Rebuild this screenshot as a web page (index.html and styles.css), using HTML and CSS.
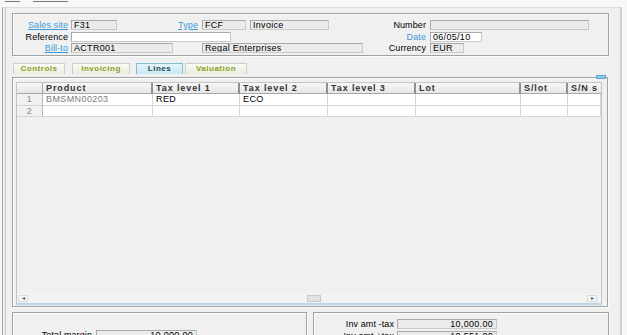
FILE: index.html
```html
<!DOCTYPE html>
<html>
<head>
<meta charset="utf-8">
<link rel="stylesheet" href="styles.css">
</head>
<body>
<div class="menu"><span class="m1"></span><span class="m2"></span></div>
<div class="window">
  <div class="panel head">
    <div class="frow">
      <a class="lbl w55 link">Sales site</a><span class="fld ro w46 ml3">F31</span>
      <a class="lbl w81 link">Type</a><span class="fld ro w44 ml4">FCF</span><span class="fld ro w79 ml4">Invoice</span>
      <span class="lbl w97">Number</span><span class="fld ro w159 ml4"></span>
    </div>
    <div class="frow">
      <span class="lbl w55">Reference</span><span class="fld w160 ml3"></span>
      <span class="lbl w195 blue">Date</span><span class="fld w52 ml4">06/05/10</span>
    </div>
    <div class="frow">
      <a class="lbl w55 link">Bill-to</a><span class="fld ro w102 ml3">ACTR001</span>
      <span class="fld ro w161 ml29">Regal Enterprises</span>
      <span class="lbl w63">Currency</span><span class="fld ro w34 ml4">EUR</span>
    </div>
  </div>

  <div class="tabs">
    <span class="tab t1">Controls</span>
    <span class="tab t2">Invoicing</span>
    <span class="tab active t3">Lines</span>
    <span class="tab t4">Valuation</span>
  </div>

  <div class="panel lines">
    <span class="corner"></span>
    <div class="grid">
      <div class="grow ghead">
        <span class="c num"></span>
        <span class="c">Product</span>
        <span class="c">Tax level 1</span>
        <span class="c">Tax level 2</span>
        <span class="c">Tax level 3</span>
        <span class="c">Lot</span>
        <span class="c">S/lot</span>
        <span class="c">S/N s</span>
      </div>
      <div class="grow gbody r1">
        <span class="c num">1</span>
        <span class="c grey">BMSMN00203</span>
        <span class="c">RED</span>
        <span class="c">ECO</span>
        <span class="c"></span>
        <span class="c"></span>
        <span class="c"></span>
        <span class="c"></span>
      </div>
      <div class="grow gbody r2">
        <span class="c num">2</span>
        <span class="c"></span>
        <span class="c"></span>
        <span class="c"></span>
        <span class="c"></span>
        <span class="c"></span>
        <span class="c"></span>
        <span class="c"></span>
      </div>
      <div class="gempty"></div>
      <div class="hscroll">
        <span class="arr left">&#9666;</span>
        <span class="track"><span class="thumb"></span></span>
        <span class="arr right">&#9656;</span>
      </div>
    </div>
  </div>

  <div class="bottom">
    <div class="panel totals">
      <div class="frow">
        <span class="lbl w79">Total margin</span><span class="fld ro num-f w101 ml4">10,000.00</span>
      </div>
    </div>
    <div class="panel amounts">
      <div class="frow">
        <span class="lbl w80">Inv amt -tax</span><span class="fld ro num-f w100 ml3">10,000.00</span>
      </div>
      <div class="frow">
        <span class="lbl w80">Inv amt +tax</span><span class="fld ro num-f w100 ml3">10,551.00</span>
      </div>
    </div>
  </div>
</div>
</body>
</html>
```

FILE: styles.css
```css
* { box-sizing: border-box; }
html, body {
  margin: 0;
  padding: 0;
}
body {
  width: 627px;
  height: 335px;
  overflow: hidden;
  background: #f8f8f8;
  font-family: "Liberation Sans", Arial, sans-serif;
  font-size: 9px;
  color: #000;
}

.menu {
  height: 7px;
  display: flex;
  align-items: flex-start;
}
.menu .m1 { width: 15px; height: 1px; background: #777; margin-left: 5px; margin-top: 1px; }
.menu .m2 { width: 35px; height: 1px; background: #777; margin-left: 13px; margin-top: 1px; }

.window {
  margin-left: 2px;
  width: 620px;
  height: 340px;
  background: #f0f0f0;
  border-left: 1px solid #a3a3a3;
  border-right: 2px solid #c3d2dc;
  border-top: 1px solid #dcdcdc;
  box-shadow: inset 2px 0 0 #f0f0f0, inset 3px 0 0 #c9c9c9;
  padding: 5px 10px 0 9px;
}

.panel {
  border: 1px solid #a2a2a2;
  box-shadow: inset 1px 1px 0 #fcfcfc, 1px 1px 0 #fcfcfc;
  background: #f0f0f0;
}

.head {
  width: 597px;
  height: 43px;
  padding-top: 6px;
}

.frow {
  display: flex;
  height: 10px;
  margin-bottom: 1.5px;
  align-items: center;
}

.lbl {
  display: block;
  text-align: right;
  white-space: nowrap;
  line-height: 10px;
  height: 10px;
  letter-spacing: 0.1px;
}
.link { color: #3a9ad9; text-decoration: underline; }
.blue { color: #3a9ad9; }

.fld {
  display: block;
  height: 10px;
  line-height: 8px;
  border: 1px solid #a9a9a9;
  border-right-color: #c9c9c9;
  border-bottom-color: #c9c9c9;
  background: #fff;
  padding-left: 2px;
  letter-spacing: 0.3px;
  white-space: nowrap;
  overflow: hidden;
}
.fld.ro { background: #ebebeb; }
.num-f { text-align: right; padding-right: 3px; }

.w34 { width: 34px; } .w44 { width: 44px; } .w46 { width: 46px; } .w52 { width: 52px; }
.w55 { width: 55px; } .w63 { width: 63px; } .w79 { width: 79px; } .w80 { width: 80px; }
.w81 { width: 81px; } .w97 { width: 97px; } .w100 { width: 100px; } .w101 { width: 101px; }
.w102 { width: 102px; } .w159 { width: 159px; } .w160 { width: 160px; } .w161 { width: 161px; }
.w195 { width: 195px; }
.ml3 { margin-left: 3px; } .ml4 { margin-left: 4px; } .ml29 { margin-left: 29px; }

/* tabs */
.tabs {
  display: flex;
  margin-top: 7px;
  margin-left: 1px;
  height: 11px;
}
.tab {
  display: block;
  height: 11px;
  line-height: 10px;
  border: 1px solid #cdcdcd;
  border-bottom: none;
  background: linear-gradient(#fbfbf6, #e9eddc);
  color: #86a024;
  font-weight: bold;
  font-size: 8px;
  letter-spacing: 0.5px;
  text-align: center;
}
.t1 { width: 52px; }
.t2 { width: 58px; margin-left: 7px; }
.t3 { width: 47px; margin-left: 6px; }
.t4 { width: 62px; margin-left: 2px; }
.tab.active {
  background: linear-gradient(#e4f5fa, #c9e8f1);
  border-color: #83bcd0;
  color: #1f4b58;
}

/* lines panel */
.lines {
  position: relative;
  margin-top: 3px;
  width: 596px;
  height: 230px;
  padding: 4px 0 0 3px;
}
.corner {
  position: absolute;
  right: 1px;
  top: -3px;
  width: 10px;
  height: 4px;
  background: #8fc6e6;
  border: 1px solid #5fa8d6;
}
.grid {
  width: 586px;
  height: 223px;
  border: 1px solid #c4c4c4;
  border-bottom: 2px solid #b9d6e6;
  display: flex;
  flex-direction: column;
  background: #f0f0f0;
  overflow: hidden;
}
.grow {
  display: grid;
  grid-template-columns: 26px 110px 87px 88px 88px 105px 47px 33px;
  width: 584px;
}
.ghead { height: 11px; }
.ghead .c {
  background: linear-gradient(#f7f7f7, #e6e6e6);
  border-right: 2px solid #8f8f8f;
  border-bottom: 1px solid #a8a8a8;
  font-weight: bold;
  color: #333;
  letter-spacing: 0.9px;
  padding-left: 3px;
  line-height: 10px;
  white-space: nowrap;
  overflow: hidden;
}
.ghead .c.num { border-right: 1px solid #a8a8a8; }
.ghead .c:last-child { border-right: none; }
.gbody .c {
  background: #fff;
  border-right: 1px solid #d5d5d5;
  border-bottom: 1px solid #d5d5d5;
  padding-left: 3px;
  letter-spacing: 0.4px;
  white-space: nowrap;
  overflow: hidden;
}
.r1 { height: 12px; }
.r1 .c { line-height: 11px; }
.r2 { height: 11px; }
.r2 .c { line-height: 10px; }
.gbody .c.num {
  background: #f1f1f1;
  color: #8a8a8a;
  text-align: center;
  padding-left: 0;
  border-right-color: #b8b8b8;
}
.grey { color: #7a7a7a; }
.gempty {
  flex: 1;
  border-right: 1px solid #dadada;
  width: 585px;
}

.hscroll {
  height: 9px;
  display: flex;
  align-items: center;
  padding: 0 4px 1px 1px;
  background: #f3f3f3;
}
.arr {
  display: block;
  width: 10px;
  height: 7px;
  border: 1px solid #dadada;
  background: #f7f7f7;
  font-size: 6px;
  line-height: 5px;
  text-align: center;
  color: #555;
}
.track {
  flex: 1;
  height: 7px;
  display: flex;
  justify-content: center;
}
.thumb {
  display: block;
  width: 14px;
  height: 7px;
  border: 1px solid #c9c9c9;
  background: #e3e3e3;
  margin-left: 12px;
}

/* bottom */
.bottom {
  display: flex;
  margin-top: 5px;
  gap: 6px;
}
.totals {
  width: 295px;
  height: 40px;
  padding-top: 17px;
}
.amounts {
  width: 296px;
  height: 40px;
  padding-top: 6px;
}
```
